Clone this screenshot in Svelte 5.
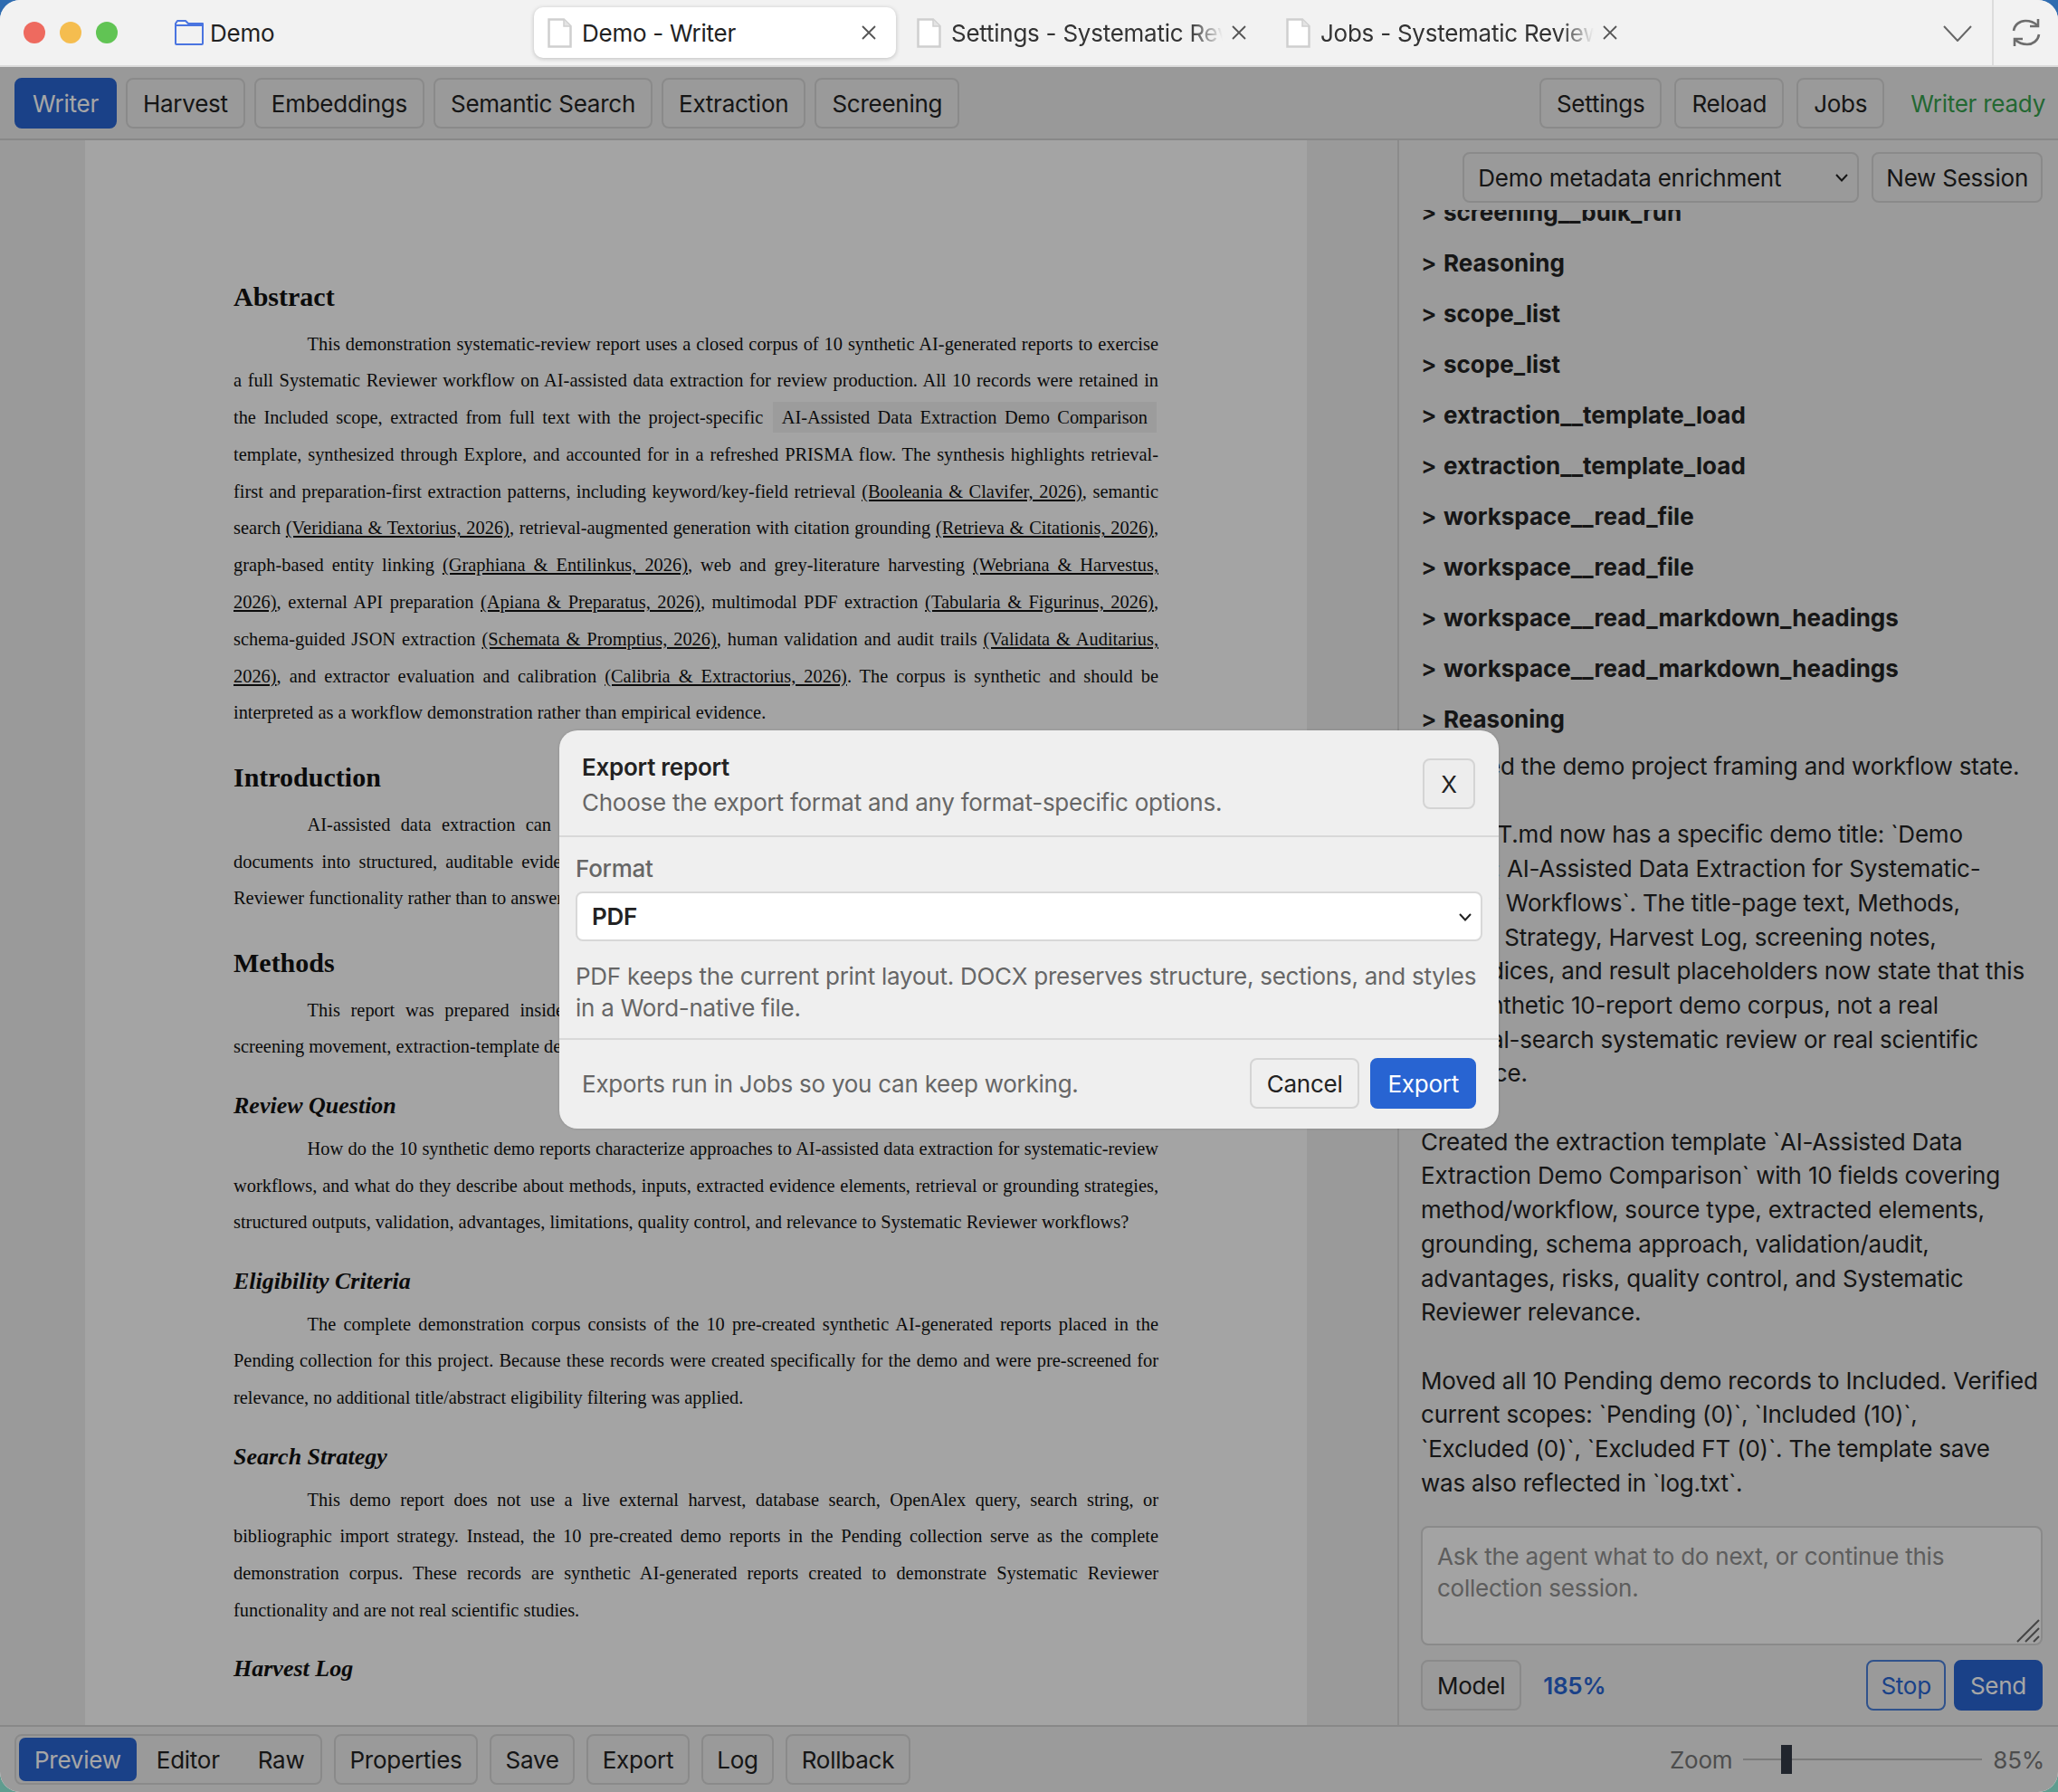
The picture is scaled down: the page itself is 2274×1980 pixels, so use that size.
<script>
  const navTabs = ['Harvest', 'Embeddings', 'Semantic Search', 'Extraction', 'Screening'];
  const toolCalls = [
    'screening__bulk_run',
    'Reasoning',
    'scope_list',
    'scope_list',
    'extraction__template_load',
    'extraction__template_load',
    'workspace__read_file',
    'workspace__read_file',
    'workspace__read_markdown_headings',
    'workspace__read_markdown_headings',
    'Reasoning'
  ];
  const docActions = ['Properties', 'Save', 'Export', 'Log', 'Rollback'];
</script>

<div class="window">
  <header class="titlebar">
    <div class="lights">
      <span class="light red"></span>
      <span class="light yellow"></span>
      <span class="light green"></span>
    </div>
    <div class="folder">
      <svg width="32" height="28" viewBox="0 0 32 28" fill="none" stroke="#4a74e0" stroke-width="2" stroke-linejoin="round">
        <path d="M1 6V26a1 1 0 0 0 1 1H30a1 1 0 0 0 1-1V6Z M1 6V4L3 1H12L15 4H31V6" />
      </svg>
      <span>Demo</span>
    </div>
    <div class="tab active">
      <svg class="doc" width="27" height="33" viewBox="0 0 27 33"><path d="M1.5 1.5H18L25.5 9V31.5H1.5Z" fill="#fff" stroke="#cfcfcf" stroke-width="2.5" /><path d="M18 1.5V9H25.5" fill="#e4e4e4" stroke="#cfcfcf" stroke-width="1.5" /></svg>
      <span class="tab-label">Demo - Writer</span>
      <svg class="x" width="16" height="16" viewBox="0 0 16 16"><path d="M1 1L15 15M15 1L1 15" stroke="#555" stroke-width="1.8" /></svg>
    </div>
    <div class="tab settings">
      <svg class="doc" width="27" height="33" viewBox="0 0 27 33"><path d="M1.5 1.5H18L25.5 9V31.5H1.5Z" fill="#fff" stroke="#cfcfcf" stroke-width="2.5" /><path d="M18 1.5V9H25.5" fill="#e4e4e4" stroke="#cfcfcf" stroke-width="1.5" /></svg>
      <span class="tab-label fade">Settings - Systematic Review</span>
      <svg class="x" width="16" height="16" viewBox="0 0 16 16"><path d="M1 1L15 15M15 1L1 15" stroke="#555" stroke-width="1.8" /></svg>
    </div>
    <div class="tab jobs">
      <svg class="doc" width="27" height="33" viewBox="0 0 27 33"><path d="M1.5 1.5H18L25.5 9V31.5H1.5Z" fill="#fff" stroke="#cfcfcf" stroke-width="2.5" /><path d="M18 1.5V9H25.5" fill="#e4e4e4" stroke="#cfcfcf" stroke-width="1.5" /></svg>
      <span class="tab-label fade">Jobs - Systematic Review</span>
      <svg class="x" width="16" height="16" viewBox="0 0 16 16"><path d="M1 1L15 15M15 1L1 15" stroke="#555" stroke-width="1.8" /></svg>
    </div>
    <svg class="chevron" width="32" height="18" viewBox="0 0 32 18"><path d="M1 1L16 17L31 1" fill="none" stroke="#666" stroke-width="2" /></svg>
    <div class="refresh">
      <svg width="32" height="34" viewBox="0 0 32 34" fill="none" stroke="#6d6d6d" stroke-width="2.6">
        <path d="M2 15C3 8 9 4 15 4C20 4 24 5 28 9" />
        <path d="M29 2V10H20" />
        <path d="M30 19C29 26 23 30 17 30C12 30 8 29 4 25" />
        <path d="M3 32V24H12" />
      </svg>
    </div>
  </header>

  <div class="content">
    <nav class="toolbar">
      <button class="btn primary writer">Writer</button>
      {#each navTabs as tab}
        <button class="btn">{tab}</button>
      {/each}
      <div class="spacer"></div>
      <button class="btn">Settings</button>
      <button class="btn">Reload</button>
      <button class="btn">Jobs</button>
      <span class="status">Writer ready</span>
    </nav>

    <main class="main">
      <section class="preview">
        <article class="page">
          <h1>Abstract</h1>
          <p>This demonstration systematic-review report uses a closed corpus of 10 synthetic AI-generated reports to exercise a full Systematic Reviewer workflow on AI-assisted data extraction for review production. All 10 records were retained in the Included scope, extracted from full text with the project-specific <span class="tmpl">AI-Assisted Data Extraction Demo Comparison</span> template, synthesized through Explore, and accounted for in a refreshed PRISMA flow. The synthesis highlights retrieval-first and preparation-first extraction patterns, including keyword/key-field retrieval <u>(Booleania &amp; Clavifer, 2026)</u>, semantic search <u>(Veridiana &amp; Textorius, 2026)</u>, retrieval-augmented generation with citation grounding <u>(Retrieva &amp; Citationis, 2026)</u>, graph-based entity linking <u>(Graphiana &amp; Entilinkus, 2026)</u>, web and grey-literature harvesting <u>(Webriana &amp; Harvestus, 2026)</u>, external API preparation <u>(Apiana &amp; Preparatus, 2026)</u>, multimodal PDF extraction <u>(Tabularia &amp; Figurinus, 2026)</u>, schema-guided JSON extraction <u>(Schemata &amp; Promptius, 2026)</u>, human validation and audit trails <u>(Validata &amp; Auditarius, 2026)</u>, and extractor evaluation and calibration <u>(Calibria &amp; Extractorius, 2026)</u>. The corpus is synthetic and should be interpreted as a workflow demonstration rather than empirical evidence.</p>

          <h1>Introduction</h1>
          <p class="broken">
            <span>AI-assisted data extraction can reduce manual effort in systematic reviews by converting the long source</span>
            <span>documents into structured, auditable evidence tables that reviewers are able to check. This demo exercises Systematic</span>
            <span>Reviewer functionality rather than to answer a substantive research question about extraction tools.</span>
          </p>

          <h1>Methods</h1>
          <p class="broken">
            <span>This report was prepared inside the Systematic Reviewer workspace, using demo project files, collection</span>
            <span>screening movement, extraction-template definitions, and the writer tools available for the demo project.</span>
          </p>

          <h2>Review Question</h2>
          <p>How do the 10 synthetic demo reports characterize approaches to AI-assisted data extraction for systematic-review workflows, and what do they describe about methods, inputs, extracted evidence elements, retrieval or grounding strategies, structured outputs, validation, advantages, limitations, quality control, and relevance to Systematic Reviewer workflows?</p>

          <h2>Eligibility Criteria</h2>
          <p>The complete demonstration corpus consists of the 10 pre-created synthetic AI-generated reports placed in the Pending collection for this project. Because these records were created specifically for the demo and were pre-screened for relevance, no additional title/abstract eligibility filtering was applied.</p>

          <h2>Search Strategy</h2>
          <p>This demo report does not use a live external harvest, database search, OpenAlex query, search string, or bibliographic import strategy. Instead, the 10 pre-created demo reports in the Pending collection serve as the complete demonstration corpus. These records are synthetic AI-generated reports created to demonstrate Systematic Reviewer functionality and are not real scientific studies.</p>

          <h2>Harvest Log</h2>
        </article>
      </section>

      <aside class="agent">
        <div class="session">
          <div class="select-wrap">
            <select class="session-select">
              <option>Demo metadata enrichment</option>
            </select>
            <svg width="14" height="9" viewBox="0 0 14 9"><path d="M1 1L7 7.5L13 1" fill="none" stroke="#222" stroke-width="2" /></svg>
          </div>
          <button class="btn new-session">New Session</button>
        </div>

        <div class="messages">
          {#each toolCalls as call}
            <div class="call"><span class="caret">&gt;</span>{call}</div>
          {/each}
          <p class="first">Updated the demo project framing and workflow state.</p>
          <p>REPORT.md now has a specific demo title: `Demo<br />
            Report: AI-Assisted Data Extraction for Systematic-<br />
            Review Workflows`. The title-page text, Methods,<br />
            Search Strategy, Harvest Log, screening notes,<br />
            appendices, and result placeholders now state that this<br />
            is a synthetic 10-report demo corpus, not a real<br />
            external-search systematic review or real scientific<br />
            evidence.</p>
          <p>Created the extraction template `AI-Assisted Data<br />
            Extraction Demo Comparison` with 10 fields covering<br />
            method/workflow, source type, extracted elements,<br />
            grounding, schema approach, validation/audit,<br />
            advantages, risks, quality control, and Systematic<br />
            Reviewer relevance.</p>
          <p>Moved all 10 Pending demo records to Included. Verified<br />
            current scopes: `Pending (0)`, `Included (10)`,<br />
            `Excluded (0)`, `Excluded FT (0)`. The template save<br />
            was also reflected in `log.txt`.</p>
        </div>

        <div class="ask-wrap">
          <textarea class="ask" placeholder="Ask the agent what to do next, or continue this collection session."></textarea>
          <svg class="grip" width="26" height="26" viewBox="0 0 26 26" fill="none" stroke="#6a6a6a" stroke-width="2">
            <path d="M1 25L25 1M10 25L25 10M19 25L25 19" />
          </svg>
        </div>

        <div class="ask-actions">
          <button class="btn">Model</button>
          <span class="usage">185%</span>
          <div class="spacer"></div>
          <button class="btn outline">Stop</button>
          <button class="btn primary">Send</button>
        </div>
      </aside>
    </main>

    <footer class="bottombar">
      <div class="segment">
        <button class="seg on">Preview</button>
        <button class="seg">Editor</button>
        <button class="seg">Raw</button>
      </div>
      {#each docActions as action}
        <button class="btn">{action}</button>
      {/each}
      <div class="spacer"></div>
      <span class="zoom-label">Zoom</span>
      <input class="zoom" type="range" min="70" max="160" value="85" />
      <span class="zoom-label">85%</span>
    </footer>

    <div class="backdrop">
      <div class="modal" role="dialog" aria-modal="true">
        <div class="modal-header">
          <div>
            <h3>Export report</h3>
            <p>Choose the export format and any format-specific options.</p>
          </div>
          <button class="btn close">X</button>
        </div>
        <div class="modal-body">
          <label for="format">Format</label>
          <div class="select-wrap">
            <select id="format" class="format-select">
              <option>PDF</option>
            </select>
            <svg width="14" height="9" viewBox="0 0 14 9"><path d="M1 1L7 7.5L13 1" fill="none" stroke="#222" stroke-width="2" /></svg>
          </div>
          <p class="help">PDF keeps the current print layout. DOCX preserves structure, sections, and styles in a Word-native file.</p>
        </div>
        <div class="modal-footer">
          <span>Exports run in Jobs so you can keep working.</span>
          <div class="spacer"></div>
          <button class="btn cancel">Cancel</button>
          <button class="btn export">Export</button>
        </div>
      </div>
    </div>
  </div>
</div>

<style>
  :global(body) {
    margin: 0;
    background: linear-gradient(#2f6cb0 50%, #5f9c8f 50%);
  }

  .window {
    display: flex;
    flex-direction: column;
    width: 2274px;
    height: 1980px;
    border-radius: 22px;
    overflow: hidden;
    font-family: Inter, "Liberation Sans", sans-serif;
    font-size: 26px;
    letter-spacing: -0.25px;
    color: #222;
    background: #ededed;
  }

  .titlebar {
    display: flex;
    align-items: center;
    flex: 0 0 74px;
    box-sizing: border-box;
    height: 74px;
    background: #f2f2f2;
    border-bottom: 2px solid #dcdcdc;
    position: relative;
  }

  .lights {
    display: flex;
    gap: 16px;
    margin-left: 26px;
  }

  .light {
    width: 24px;
    height: 24px;
    border-radius: 50%;
  }

  .red { background: #ee6a5f; }
  .yellow { background: #f5bd4f; }
  .green { background: #61c454; }

  .folder {
    display: flex;
    align-items: center;
    gap: 7px;
    margin-left: 63px;
    width: 397px;
  }

  .tab {
    display: flex;
    align-items: center;
    box-sizing: border-box;
    height: 56px;
    padding: 0 12px 0 15px;
    white-space: nowrap;
    color: #333;
  }

  .tab.settings {
    width: 408px;
    padding-right: 19px;
  }

  .tab.jobs {
    width: 403px;
  }

  .tab.active {
    background: #fff;
    border-radius: 10px;
    box-shadow: 0 1px 5px rgba(0, 0, 0, 0.22);
    color: #222;
    margin-right: 8px;
    width: 400px;
  }

  .doc {
    flex: none;
    margin-right: 11px;
  }

  .tab-label {
    flex: 1;
    overflow: hidden;
  }

  .fade {
    -webkit-mask-image: linear-gradient(90deg, #000 88%, transparent);
    mask-image: linear-gradient(90deg, #000 88%, transparent);
  }

  .x {
    flex: none;
    margin: 0 10px;
  }

  .chevron {
    position: absolute;
    left: 2147px;
    top: 28px;
  }

  .refresh {
    position: absolute;
    left: 2201px;
    top: 0;
    bottom: 0;
    width: 73px;
    display: flex;
    align-items: center;
    justify-content: center;
    border-left: 2px solid #dcdcdc;
    box-sizing: border-box;
  }

  .content {
    flex: 1;
    display: flex;
    flex-direction: column;
    min-height: 0;
    position: relative;
  }

  .toolbar {
    display: flex;
    align-items: center;
    gap: 10px;
    flex: 0 0 81px;
    box-sizing: border-box;
    padding: 1px 16px 0;
    background: #ececec;
    border-bottom: 2px solid #d2d2d2;
  }

  .spacer {
    flex: 1;
  }

  .btn {
    font: inherit;
    letter-spacing: inherit;
    height: 56px;
    padding: 0 17px;
    box-sizing: border-box;
    color: #222;
    background: #ededed;
    border: 2px solid #d4d4d4;
    border-radius: 8px;
  }

  .btn.primary {
    background: #2864d2;
    border-color: #2864d2;
    color: #fff;
  }

  .btn.writer {
    padding: 0 18px;
  }

  .toolbar .btn:nth-last-of-type(3),
  .toolbar .btn:nth-last-of-type(2),
  .toolbar .btn:nth-last-of-type(1) {
    margin-left: 4px;
  }

  .status {
    color: #37a04e;
    margin-left: 19px;
    margin-right: -2px;
  }

  .main {
    flex: 1;
    display: flex;
    min-height: 0;
  }

  .preview {
    flex: 0 0 1546px;
    box-sizing: border-box;
    padding-left: 94px;
    padding-right: 100px;
    background: #ededed;
    border-right: 2px solid #d6d6d6;
    overflow: hidden;
  }

  .page {
    box-sizing: border-box;
    height: 100%;
    padding: 152.5px 164px 0;
    background: #fcfcfc;
    font-family: "Liberation Serif", "Times New Roman", serif;
    font-size: 20.4px;
    line-height: 40.8px;
    letter-spacing: 0;
    color: #111;
  }

  .page h1 {
    font-size: 30px;
    line-height: 40px;
    margin: 0 0 12px;
  }

  .page p + h1 {
    margin-top: 30.5px;
  }

  .page h2 {
    font-size: 26px;
    font-style: italic;
    line-height: 34px;
    margin: 27.5px 0 10px;
  }

  .page p {
    margin: 0;
    text-indent: 81.6px;
    text-align: justify;
  }

  .page p.broken {
    text-indent: 0;
  }

  .broken span {
    display: block;
    white-space: nowrap;
    overflow: hidden;
    text-align-last: justify;
  }

  .broken span:first-child {
    text-indent: 81.6px;
  }

  .broken span:last-child {
    text-align-last: left;
  }

  .tmpl {
    background: #f0f0f0;
    padding: 6px 10px;
    margin: 0 2px;
  }

  .agent {
    flex: 1;
    min-width: 0;
    display: flex;
    flex-direction: column;
    box-sizing: border-box;
    padding: 0 17px 16px 24px;
    background: #eeeeee;
  }

  .session {
    display: flex;
    justify-content: flex-end;
    gap: 14px;
    padding-top: 13px;
    padding-bottom: 8px;
  }

  .btn.new-session {
    padding: 0 14px;
  }

  .select-wrap {
    position: relative;
  }

  .select-wrap svg {
    position: absolute;
    right: 12px;
    top: 50%;
    margin-top: -4px;
    pointer-events: none;
  }

  .session-select,
  .format-select {
    appearance: none;
    font: inherit;
    letter-spacing: inherit;
    box-sizing: border-box;
    color: #222;
  }

  .session-select {
    display: block;
    width: 438px;
    height: 56px;
    padding: 0 15px;
    background: #ededed;
    border: 2px solid #d4d4d4;
    border-radius: 8px;
  }

  .messages {
    flex: 1;
    min-height: 0;
    display: flex;
    flex-direction: column;
    justify-content: flex-end;
    overflow: hidden;
    margin-bottom: 28.5px;
    line-height: 37.7px;
    font-size: 26px;
    letter-spacing: -0.2px;
  }

  .messages p {
    margin: 0 0 37.7px;
    flex: none;
    white-space: nowrap;
  }

  .messages p.first {
    margin-bottom: 37.5px;
  }

  .messages p:last-child {
    margin-bottom: 0;
  }

  .call {
    flex: none;
    height: 56px;
    line-height: 56px;
    font-weight: 700;
    letter-spacing: 0;
    white-space: nowrap;
  }

  .call:nth-of-type(11) {
    height: 61px;
  }

  .caret {
    display: inline-block;
    width: 25px;
    font-weight: 600;
  }

  .ask-wrap {
    position: relative;
    margin-bottom: 16px;
  }

  .ask {
    display: block;
    height: 132px;
    box-sizing: border-box;
    width: 100%;
    font: inherit;
    letter-spacing: inherit;
    line-height: 35px;
    padding: 14px 16px;
    background: #fafafa;
    border: 2px solid #d4d4d4;
    border-radius: 8px;
    resize: none;
  }

  .ask::placeholder {
    color: #909090;
  }

  .grip {
    position: absolute;
    right: 3px;
    bottom: 3px;
  }

  .ask-actions {
    display: flex;
    align-items: center;
    gap: 9px;
  }

  .ask-actions .btn {
    padding: 0 16px;
  }

  .usage {
    color: #2864d2;
    font-weight: 600;
    margin-left: 15px;
  }

  .ask-actions .btn.outline {
    color: #2864d2;
    border-color: #4a7fd8;
    padding: 0 14px;
  }

  .bottombar {
    display: flex;
    align-items: center;
    flex: 0 0 74px;
    gap: 13px;
    box-sizing: border-box;
    padding: 0 15px 0 16px;
    background: #efefef;
    border-top: 2px solid #d2d2d2;
  }

  .bottombar .btn {
    padding: 0 15.5px;
  }

  .segment {
    display: flex;
    align-items: center;
    gap: 2px;
    box-sizing: border-box;
    height: 56px;
    padding: 0 3px;
    background: #ededed;
    border: 2px solid #d4d4d4;
    border-radius: 8px;
    width: 340px;
  }

  .seg {
    font: inherit;
    letter-spacing: inherit;
    height: 48px;
    padding: 0 20px;
    background: none;
    border: 0;
    border-radius: 7px;
    color: #222;
  }

  .seg.on {
    background: #2864d2;
    color: #fff;
    padding: 0 17px;
  }

  .zoom-label {
    color: #777;
  }

  .zoom {
    appearance: none;
    width: 264px;
    height: 32px;
    margin: 0 -1px;
    background: linear-gradient(#bdbdbd, #bdbdbd) center / 100% 2px no-repeat;
  }

  .zoom::-webkit-slider-thumb {
    appearance: none;
    width: 12px;
    height: 32px;
    background: #333946;
  }

  .backdrop {
    position: absolute;
    inset: 0;
    display: flex;
    align-items: center;
    justify-content: center;
    background: rgba(0, 0, 0, 0.35);
  }

  .modal {
    display: flex;
    flex-direction: column;
    width: 1038px;
    height: 440px;
    background: #efefef;
    border-radius: 20px;
    box-shadow: 0 0 3px rgba(0, 0, 0, 0.15);
  }

  .modal-header {
    display: flex;
    justify-content: space-between;
    align-items: flex-start;
    height: 118px;
    flex: none;
    box-sizing: border-box;
    padding: 24px 26px 0 25px;
    border-bottom: 2px solid #d8d8d8;
  }

  .modal-header h3 {
    margin: 0;
    font-size: 26px;
    line-height: 34px;
    font-weight: 600;
  }

  .modal-header p {
    margin: 5px 0 0;
    line-height: 34px;
    color: #666;
  }

  .close {
    width: 58px;
    height: 56px;
    margin-top: 7px;
    padding: 0;
  }

  .modal-body {
    flex: 1;
    padding: 18px 18px 0;
  }

  .modal-body label {
    display: block;
    font-weight: 500;
    color: #666;
    line-height: 34px;
    margin-bottom: 8px;
  }

  .format-select {
    display: block;
    width: 100%;
    height: 55px;
    padding: 0 16px;
    background: #fff;
    border: 2px solid #d8d8d8;
    border-radius: 8px;
    font-weight: 600;
  }

  .help {
    margin: 21px 0 0;
    line-height: 35px;
    color: #666;
  }

  .modal-footer {
    display: flex;
    align-items: center;
    flex: none;
    gap: 12px;
    height: 100px;
    box-sizing: border-box;
    padding: 0 25px 2px;
    border-top: 2px solid #d8d8d8;
    color: #666;
  }

  .btn.cancel {
    background: #efefef;
  }

  .btn.export {
    background: #2864d2;
    border-color: #2864d2;
    color: #fff;
  }
</style>
